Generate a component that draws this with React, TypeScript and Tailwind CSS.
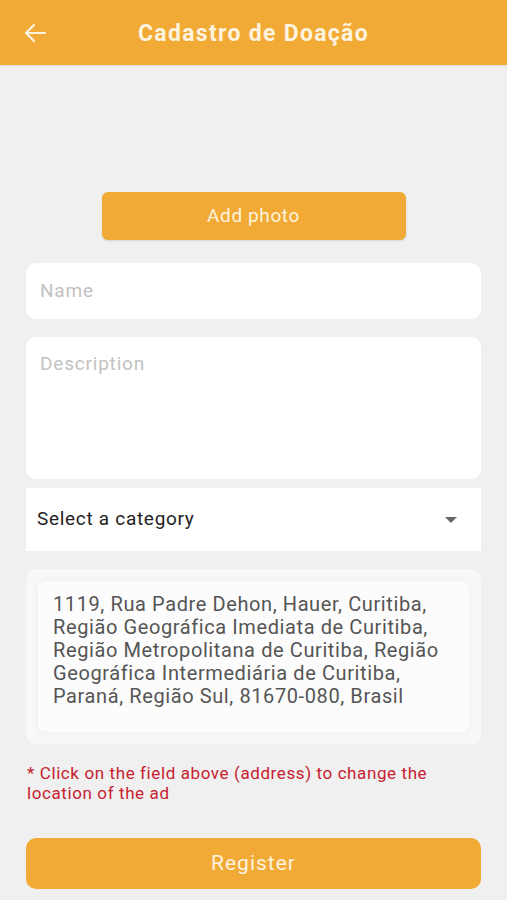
import React from "react";

const Field = ({ label, className }: { label: string; className: string }) => (
  <div className={`bg-white rounded-[10px] px-[14px] text-[19px] tracking-[0.8px] text-[#c2c2c2] ${className}`}>{label}</div>
);

const App = () => {
  return (
    <div
      className="w-[507px] h-[900px] overflow-hidden bg-[#f0f0f0]"
      style={{ fontFamily: "Roboto, 'Noto Sans', sans-serif" }}
    >
      <header className="h-[65px] bg-[#f2aa36] flex items-center relative shadow-[0_1px_2px_rgba(0,0,0,0.08)]">
        <svg
          className="absolute left-[23px] top-[22px]"
          width="24"
          height="22"
          viewBox="0 0 24 22"
          fill="none"
          stroke="#fdf3de"
          strokeWidth="2.2"
          strokeLinecap="round"
          strokeLinejoin="round"
        >
          <path d="M22 11H3" />
          <path d="M11 3L3 11L11 19" />
        </svg>
        <h1 className="w-full text-center mt-[4px] text-[23px] font-bold text-[#fdf3de] tracking-[1.3px]">
          Cadastro de Doação
        </h1>
      </header>

      <div className="px-[26px] flex flex-col">
        <button className="mt-[127px] mx-auto w-[304px] h-[48px] rounded-[6px] bg-[#f2aa36] text-[19px] tracking-[0.6px] text-[#fdf3de] shadow-[0_1px_2px_rgba(0,0,0,0.12)]">
          Add photo
        </button>

        <Field label="Name" className="mt-[23px] h-[56px] flex items-center" />
        <Field label="Description" className="mt-[18px] h-[142px] pt-[13px]" />

        <div className="mt-[9px] h-[63px] bg-white flex items-center justify-between pl-[11px] pr-[24px]">
          <span className="text-[19px] tracking-[0.7px] text-[#222]">Select a category</span>
          <svg width="12" height="6" viewBox="0 0 12 6">
            <path d="M0 0H12L6 6Z" fill="#666" />
          </svg>
        </div>

        <div className="mt-[18px] h-[175px] bg-[#f8f8f8] rounded-[10px] p-[12px]">
          <div className="h-full bg-[#fcfcfc] rounded-[8px] shadow-[0_0_8px_rgba(0,0,0,0.05)] pl-[15px] pt-[12px] pr-[4px] text-[20px] leading-[23px] text-[#555] tracking-[0.6px]">
            1119, Rua Padre Dehon, Hauer, Curitiba, Região Geográfica Imediata de Curitiba, Região Metropolitana de Curitiba, Região Geográfica Intermediária de Curitiba, Paraná, Região Sul, 81670-080, Brasil
          </div>
        </div>

        <p className="mt-[19px] text-[17px] leading-[20px] text-[#c7212f] tracking-[0.6px] pl-[1px] pr-[20px]">
          * Click on the field above (address) to change the location of the ad
        </p>

        <button className="mt-[35px] h-[51px] w-full rounded-[10px] bg-[#f2aa36] text-[21px] tracking-[1px] text-[#fdf3de]">
          Register
        </button>
      </div>
    </div>
  );
};

export default App;
